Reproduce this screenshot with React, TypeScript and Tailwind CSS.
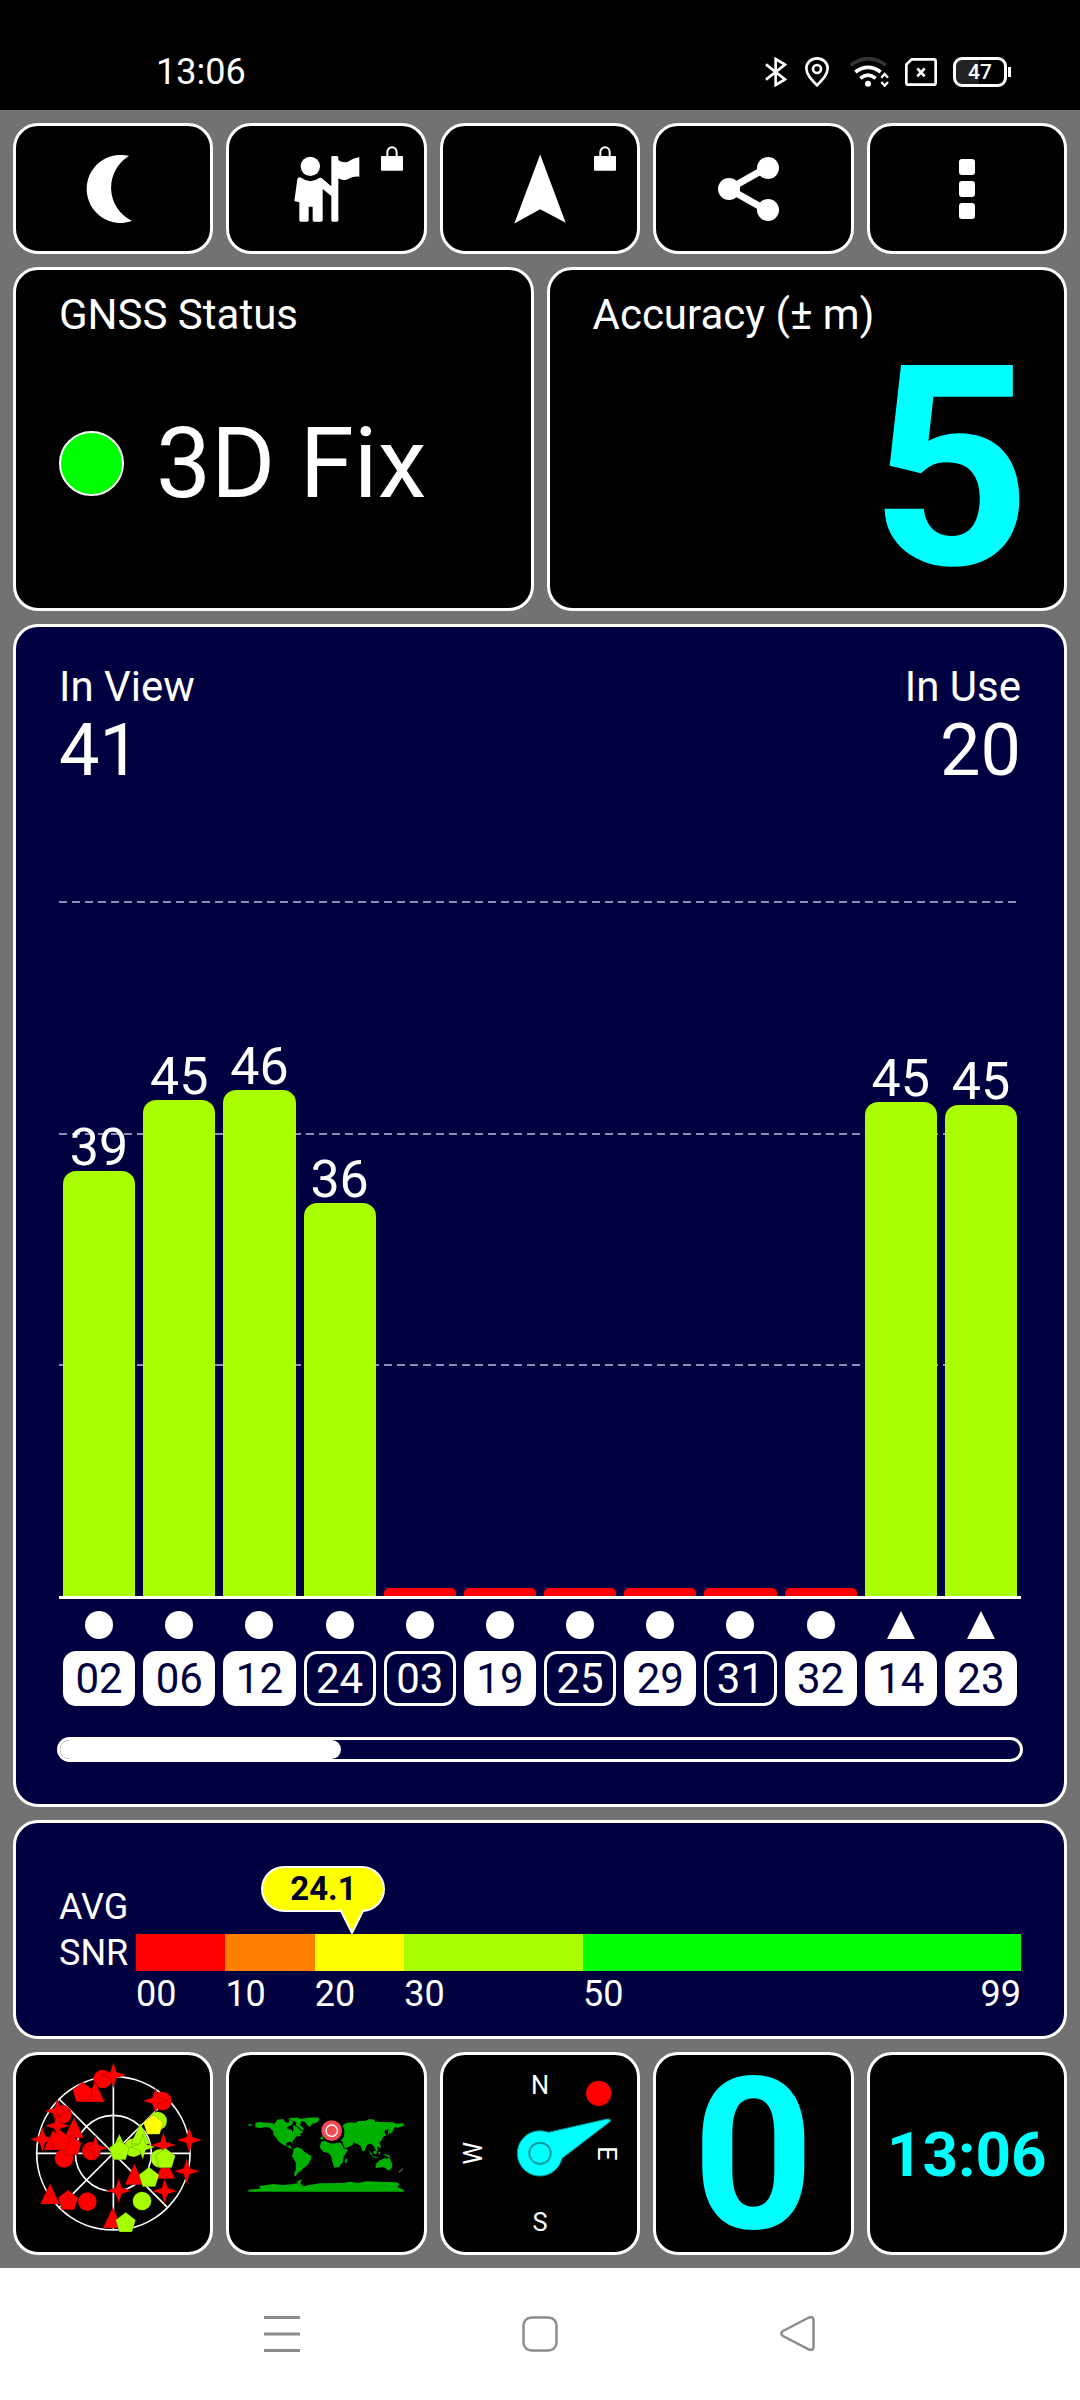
import type { ReactNode } from 'react';
import clsx from 'clsx';

const SNR_MAX = 63;

type Satellite = { id: string; snr: number; inUse: boolean; shape: 'circle' | 'triangle' };

const satellites: Satellite[] = [
    { id: '02', snr: 38.5, inUse: true, shape: 'circle' },
    { id: '06', snr: 45, inUse: true, shape: 'circle' },
    { id: '12', snr: 45.9, inUse: true, shape: 'circle' },
    { id: '24', snr: 35.6, inUse: false, shape: 'circle' },
    { id: '03', snr: 0, inUse: false, shape: 'circle' },
    { id: '19', snr: 0, inUse: true, shape: 'circle' },
    { id: '25', snr: 0, inUse: false, shape: 'circle' },
    { id: '29', snr: 0, inUse: true, shape: 'circle' },
    { id: '31', snr: 0, inUse: false, shape: 'circle' },
    { id: '32', snr: 0, inUse: true, shape: 'circle' },
    { id: '14', snr: 44.8, inUse: true, shape: 'triangle' },
    { id: '23', snr: 44.5, inUse: true, shape: 'triangle' },
];

const scale = [
    { label: '00', span: 10, color: 'bg-[#ff0000]' },
    { label: '10', span: 10, color: 'bg-[#ff8000]' },
    { label: '20', span: 10, color: 'bg-[#ffff00]' },
    { label: '30', span: 20, color: 'bg-[#a8ff00]' },
    { label: '50', span: 49, color: 'bg-[#00ff00]' },
];

type Mark = [kind: 'star' | 'circle' | 'triangle' | 'pentagon', x: number, y: number, color: string];

const RED = '#ff0000';
const LIME = '#a8ff00';

const skyMarks: Mark[] = [
    ['circle', 308, 118, RED],
    ['star', 340, 106, RED],
    ['triangle', 285, 160, RED],
    ['pentagon', 248, 158, RED],
    ['circle', 487, 184, RED],
    ['star', 466, 183, RED],
    ['circle', 187, 224, RED],
    ['star', 172, 214, RED],
    ['star', 172, 258, RED],
    ['triangle', 222, 268, RED],
    ['star', 127, 299, RED],
    ['triangle', 160, 304, RED],
    ['circle', 192, 356, RED],
    ['pentagon', 214, 318, RED],
    ['pentagon', 180, 302, RED],
    ['circle', 274, 334, RED],
    ['star', 286, 325, RED],
    ['circle', 473, 244, LIME],
    ['pentagon', 460, 256, '#ffff00'],
    ['triangle', 358, 318, LIME],
    ['circle', 400, 324, LIME],
    ['triangle', 421, 286, LIME],
    ['star', 428, 322, LIME],
    ['pentagon', 358, 332, LIME],
    ['star', 490, 316, RED],
    ['star', 568, 301, RED],
    ['circle', 480, 356, LIME],
    ['triangle', 496, 390, RED],
    ['pentagon', 496, 356, LIME],
    ['star', 560, 395, RED],
    ['triangle', 403, 408, RED],
    ['pentagon', 447, 413, LIME],
    ['star', 356, 453, RED],
    ['star', 494, 454, RED],
    ['circle', 426, 484, LIME],
    ['triangle', 150, 466, RED],
    ['pentagon', 204, 482, RED],
    ['circle', 262, 486, RED],
    ['triangle', 338, 538, RED],
    ['pentagon', 377, 549, LIME],
];

function SkyMark({ mark }: { mark: Mark }) {
    const [kind, x, y, color] = mark;
    const common = { fill: color, stroke: '#000', strokeOpacity: 0.3, strokeWidth: 2 };
    return (
        <g transform={`translate(${x} ${y})`} {...common}>
            {kind === 'circle' && <circle r="28" />}
            {kind === 'triangle' && <path d="M0-35 29 27H-29Z" />}
            {kind === 'pentagon' && <path d="M0-31 30-8 19 28H-19L-30-8Z" />}
            {kind === 'star' && <path d="M0-38 9-9 38 0 9 9 0 38-9 9-38 0-9-9Z" />}
        </g>
    );
}

function StatusBar() {
    return (
        <header className="flex h-[110px] items-center justify-between bg-black pt-[34px] pr-[69px] pl-[156px] text-white">
            <time className="text-[36px] leading-[44px]">13:06</time>
            <div className="flex items-center gap-4">
                <svg className="h-[30px] w-[22px]" viewBox="76 51 66 90" fill="none" stroke="#fff" strokeWidth="8">
                    <path d="M79 73 136 118 108 135V57L136 74 79 119" />
                </svg>
                <svg className="h-[30px] w-[30px]" viewBox="189 51 90 90" fill="none" stroke="#fff" strokeWidth="8">
                    <path d="M231 136C213 118 199 103 199 85a32 30 0 0 1 64 0c0 18-14 33-32 51Z" />
                    <circle cx="231" cy="87" r="12" />
                </svg>
                <svg className="h-[30px] w-10" viewBox="327 51 120 90" fill="none" stroke="#fff" strokeWidth="11">
                    <path d="M332 76Q384 36 438 76" stroke="#333" />
                    <path d="M346 96Q384 68 422 96" />
                    <path d="M361 115Q384 96 407 115" />
                    <circle cx="384" cy="131" r="9" fill="#fff" stroke="none" />
                    <path d="M424 113 434 102 444 113M424 126 434 137 444 126" strokeWidth="7" />
                </svg>
                <svg className="h-[30px] w-8" viewBox="492 51 96 90" fill="none" stroke="#fff" strokeWidth="8">
                    <path d="M512 58H578Q584 58 584 64V128Q584 134 578 134H502Q496 134 496 128V74Z" />
                    <path d="M529 85 551 109M551 85 529 109" />
                </svg>
                <div className="flex items-center gap-[1px]">
                    <div className="flex h-[30px] w-[54px] items-center justify-center rounded-[9px] border-[3px] border-white bg-linear-to-r from-[#222222] from-47% to-black to-47% text-[21px] leading-[24px] font-medium">
                        47
                    </div>
                    <div className="h-[10px] w-[3px] bg-white" />
                </div>
            </div>
        </header>
    );
}

function Tile({ label, className, children }: { label: string; className?: string; children: ReactNode }) {
    return (
        <button
            type="button"
            aria-label={label}
            className={clsx(
                'relative flex min-w-0 flex-1 items-center justify-center rounded-[25px] border-[3px] border-white bg-black',
                className,
            )}
        >
            {children}
        </button>
    );
}

function Lock() {
    return (
        <svg className="absolute top-[20px] right-[21px] h-[25px] w-[22px]" viewBox="0 0 66 75">
            <path d="M19 34V19a14 15 0 0 1 28 0V34" fill="none" stroke="#fff" strokeWidth="6" />
            <rect x="0" y="30" width="66" height="44" rx="3" fill="#fff" />
        </svg>
    );
}

function Toolbar() {
    return (
        <div className="flex gap-[13px]">
            <Tile label="Night mode" className="h-[131px]">
                <svg className="h-[68px] w-[54px]" viewBox="-3 0 54 68" fill="#fff">
                    <path d="M40 1A34 34 0 1 0 43 66A37 37 0 0 1 40 1Z" />
                </svg>
            </Tile>
            <Tile label="Guide" className="h-[131px]">
                <svg className="h-[66px] w-[66px]" viewBox="221 137 198 198" fill="#fff">
                    <circle cx="270" cy="168" r="29" />
                    <path d="M238 201Q232 201 231 207L222 272 237 276V330Q237 334 241 334H260Q265 334 265 330V289H277V330Q277 334 281 334H303Q307 334 307 330V236L333 257V330Q333 334 337 334H350Q354 334 354 330V204C368 212 378 210 388 204 397 199 405 197 417 199V141C405 142 397 146 388 151 376 158 366 157 354 149V141Q353 137 349 137H337Q333 137 333 141V228L307 206Q302 201 297 203 270 222 244 203Z" />
                </svg>
                <Lock />
            </Tile>
            <Tile label="Navigate" className="h-[131px]">
                <svg className="h-[70px] w-[52px]" viewBox="882 130 157 208" fill="#fff">
                    <path d="M961 130 1038 336 961 295 883 338Z" />
                </svg>
                <Lock />
            </Tile>
            <Tile label="Share" className="h-[131px]">
                <svg className="h-[66px] w-[70px]" viewBox="0 0 70 66" fill="#fff">
                    <path d="M50 11 11 33 50 55" fill="none" stroke="#fff" strokeWidth="7" />
                    <circle cx="50" cy="12" r="11" />
                    <circle cx="11" cy="33" r="11" />
                    <circle cx="50" cy="54" r="11" />
                </svg>
            </Tile>
            <Tile label="More" className="h-[131px]">
                <svg className="h-[60px] w-4" viewBox="0 0 16 60" fill="#fff">
                    <rect width="16" height="16" rx="3" />
                    <rect y="22" width="16" height="16" rx="3" />
                    <rect y="44" width="16" height="16" rx="3" />
                </svg>
            </Tile>
        </div>
    );
}

function StatusCards() {
    return (
        <div className="grid grid-cols-2 gap-[13px]">
            <section className="flex h-[344px] flex-col rounded-[25px] border-[3px] border-white bg-black px-[43px] pt-[21px]">
                <h2 className="text-[42px] leading-[48px]">GNSS Status</h2>
                <div className="flex flex-1 items-center gap-8 pb-5">
                    <span className="size-[65px] rounded-full border-2 border-white bg-[#00ff00]" />
                    <span className="text-[98px] leading-[96px]">3D Fix</span>
                </div>
            </section>
            <section className="flex h-[344px] flex-col rounded-[25px] border-[3px] border-white bg-black pt-[21px] pr-[33px] pl-[43px]">
                <h2 className="text-[42px] leading-[48px]">Accuracy (± m)</h2>
                <div className="flex flex-1 items-center justify-end pb-3 text-[280px] leading-[200px] font-bold text-[#00ffff]">
                    5
                </div>
            </section>
        </div>
    );
}

function SatelliteChart() {
    return (
        <section className="flex min-h-[900px] flex-1 flex-col rounded-[25px] border-[3px] border-white bg-[#000040] px-[43px] pt-9 pb-[42px]">
            <div className="flex justify-between">
                <div>
                    <div className="text-[42px] leading-[48px]">In View</div>
                    <div className="mt-1 text-[72px] leading-[72px]">41</div>
                </div>
                <div className="text-right">
                    <div className="text-[42px] leading-[48px]">In Use</div>
                    <div className="mt-1 text-[72px] leading-[72px]">20</div>
                </div>
            </div>

            <div className="mt-[114px] grid flex-1 border-b-[3px] border-white">
                <div className="col-start-1 row-start-1 flex flex-col">
                    {[63, 42, 21].map((level) => (
                        <div key={level} className="flex-1">
                            <div className="h-[2px] bg-[repeating-linear-gradient(90deg,#8c8cb4_0_8px,transparent_8px_13px)]" />
                        </div>
                    ))}
                </div>
                <div className="col-start-1 row-start-1 flex">
                    {satellites.map((sat) => (
                        <div key={sat.id} className="flex flex-1 flex-col px-1">
                            <div
                                className="flex min-h-0 basis-0 items-end justify-center text-[52px] leading-[46px]"
                                style={{ flexGrow: SNR_MAX - (sat.snr || 0.7) }}
                            >
                                {sat.snr > 0 && Math.round(sat.snr)}
                            </div>
                            <div
                                className={clsx('min-h-0 basis-0', sat.snr > 0 ? 'rounded-t-[13px] bg-[#a8ff00]' : 'rounded-t-[5px] bg-[#ff0000]')}
                                style={{ flexGrow: sat.snr || 0.7 }}
                            />
                        </div>
                    ))}
                </div>
            </div>

            <ul className="mt-3 flex">
                {satellites.map((sat) => (
                    <li key={sat.id} className="flex flex-1 flex-col items-center gap-3 px-1">
                        <svg className="size-7" viewBox="0 0 28 28" fill="#fff">
                            {sat.shape === 'circle' ? <circle cx="14" cy="14" r="14" /> : <path d="M14 0 28 28H0Z" />}
                        </svg>
                        <span
                            className={clsx(
                                'flex h-[55px] w-full items-center justify-center rounded-[13px] border-[3px] border-white text-[42px] leading-[48px]',
                                sat.inUse ? 'bg-white text-[#000040]' : 'text-white',
                            )}
                        >
                            {sat.id}
                        </span>
                    </li>
                ))}
            </ul>

            <div className="-mx-[2px] mt-[31px] h-[25px] overflow-hidden rounded-full border-[3px] border-white">
                <div className="h-full rounded-r-full bg-white" style={{ width: `${(12 / 41) * 100}%` }} />
            </div>
        </section>
    );
}

function SnrScale() {
    return (
        <section className="flex rounded-[25px] border-[3px] border-white bg-[#000040] px-[43px] pt-[61px] pb-[22px] text-[36px]">
            <div className="w-[77px] leading-[46px]">
                AVG
                <br />
                SNR
            </div>
            <div className="relative mt-[50px] flex-1">
                <div
                    className="absolute bottom-full -ml-[90px] w-[124px] text-[#000028]"
                    style={{ left: `${(24.1 / 99) * 100}%` }}
                >
                    <div className="h-[46px] rounded-full border-2 border-white bg-[#ffff00] text-center text-[33px] leading-[42px] font-bold">
                        24.1
                    </div>
                    <svg className="-mt-[3px] ml-[78px] block h-[25px] w-[26px]" viewBox="0 0 26 25">
                        <path d="M1 0 13 24 25 0" fill="#ffff00" stroke="#fff" strokeWidth="2" />
                    </svg>
                </div>
                <div className="flex">
                    {scale.map(({ label, span, color }) => (
                        <div key={label} className="basis-0" style={{ flexGrow: span }}>
                            <div className={clsx('h-[37px]', color)} />
                            <div className="mt-[3px] flex justify-between leading-[40px]">
                                <span>{label}</span>
                                {label === '50' && <span>99</span>}
                            </div>
                        </div>
                    ))}
                </div>
            </div>
        </section>
    );
}

function SkyPlot() {
    return (
        <svg className="size-full" viewBox="48 46 583 591">
            <g fill="none" stroke="#fff" strokeWidth="5">
                <circle cx="340" cy="341" r="230" />
                <circle cx="340" cy="341" r="114" />
                <path d="M340 111V571M110 341H570M177 178 503 504M503 178 177 504" />
            </g>
            {skyMarks.map((mark, i) => (
                <SkyMark key={i} mark={mark} />
            ))}
        </svg>
    );
}

function WorldMap() {
    return (
        <svg className="size-full" viewBox="28 46 583 591" fill="#00b000">
            <path d="M86 254H96V258H86ZM107 250 118 247 150 250 165 252 172 240 190 238 196 246 206 250 210 240 220 244 218 256 202 262 204 268 216 270 218 280 222 268 220 256 232 262 240 270 252 278 240 282 244 290 230 290 224 298 218 306 221 314 214 306 204 308 198 312 202 320 212 317 214 326 226 331 214 328 200 320 188 314 176 304 170 296 162 286 160 274 150 264 136 262 122 266 107 263Z" />
            <path d="M204 238 214 234 236 234 242 238 262 234 296 233 298 242 290 250 278 252 270 262 262 256 256 246 246 244 240 256 252 266 250 274 240 266 228 256 230 248 218 242Z" />
            <path d="M222 328 232 322 246 328 256 338 276 350 272 362 262 378 252 384 244 394 236 398 228 410 222 406 228 390 229 370 217 350 220 338Z" />
            <path d="M304 308 312 304 330 302 345 308 364 310 372 326 384 330 378 342 372 350 370 366 358 382 344 384 338 366 334 348 326 340 310 336 300 322ZM377 360 384 355 382 368 377 372Z" />
            <path d="M300 298 310 286 330 290 350 296 364 300 372 292 366 262 374 252 392 248 408 250 414 244 436 244 450 238 464 240 466 246 520 248 530 252 552 250V259L534 264 526 262 518 276 510 284 508 270 496 270 494 278 500 286 490 292 484 304 476 312 480 322 472 322 476 334 468 330 460 316 450 312 442 316 434 334 428 334 422 318 412 312 402 308 400 314 392 320 376 326 370 314 368 304Z" />
            <path d="M446 330 456 342 460 350 452 344ZM462 334 472 332 470 344 462 342ZM474 312 480 310 484 322 480 326ZM490 342 506 346 516 354 500 350ZM458 350 474 353 472 355 458 353ZM476 338 482 336 480 346ZM506 272 510 266 514 268 504 290Z" />
            <path d="M468 374 480 362 490 358 496 354 502 358 508 352 518 374 516 386 506 393 496 384 484 382 468 386Z" />
            <path d="M537 398 550 387" stroke="#556" strokeWidth="4" />
            <path d="M86 456V450L120 447V439L160 433 190 436 215 434 238 430 230 427 246 419 242 432 252 440 268 436 300 431 372 430 390 426 414 430 440 425 500 427 530 428 540 434 532 442 552 450V456Z" />
            <circle cx="340" cy="278" r="34" fill="#000" />
            <circle cx="336" cy="273" r="31" fill="#f04a50" />
            <circle cx="336" cy="273" r="17" fill="#f04a50" stroke="#fff" strokeWidth="4" />
        </svg>
    );
}

function Compass() {
    return (
        <svg className="size-full" viewBox="39 46 583 591">
            <g fill="#fff" fontSize="76" textAnchor="middle">
                <text x="330" y="163">
                    N
                </text>
                <text x="330" y="573">
                    S
                </text>
                <text transform="translate(504 341) rotate(90)">E</text>
                <text transform="translate(156 341) rotate(-90)">W</text>
            </g>
            <circle cx="506" cy="161" r="38" fill="#ff0000" />
            <path
                d="M355 278 530 238Q546 237 540 246L396 356A68 68 0 1 1 355 278Z"
                fill="#00ffff"
                stroke="#008c8c"
                strokeWidth="3"
            />
            <circle cx="330" cy="341" r="32" fill="none" stroke="#009ea0" strokeWidth="6" />
        </svg>
    );
}

function PageTiles() {
    return (
        <div className="flex gap-[13px] font-bold text-[#00ffff]">
            <Tile label="Sky view" className="h-[203px]">
                <SkyPlot />
            </Tile>
            <Tile label="Position" className="h-[203px]">
                <WorldMap />
            </Tile>
            <Tile label="Compass" className="h-[203px] font-normal">
                <Compass />
            </Tile>
            <Tile label="Speed" className="h-[203px] pt-1 text-[212px] leading-[192px]">
                0
            </Tile>
            <Tile label="Time" className="h-[203px] pt-[2px] text-[62px] leading-[72px]">
                13:06
            </Tile>
        </div>
    );
}

function NavBar() {
    return (
        <nav className="flex h-[132px] items-center justify-center gap-[222px] bg-white">
            <button type="button" aria-label="Recents">
                <svg className="block size-9" viewBox="0 0 72 72" stroke="#8c8c8c" strokeWidth="6">
                    <path d="M0 3H72M0 36H72M0 69H72" />
                </svg>
            </button>
            <button type="button" aria-label="Home">
                <svg className="block size-9" viewBox="0 0 72 72" fill="none" stroke="#8c8c8c" strokeWidth="5">
                    <rect x="3" y="3" width="66" height="66" rx="16" />
                </svg>
            </button>
            <button type="button" aria-label="Back">
                <svg className="block size-9" viewBox="0 0 72 72" fill="none" stroke="#8c8c8c" strokeWidth="5">
                    <path d="M58 3 6 30Q-1 35 6 40L58 67Q67 70 67 62V8Q67 0 58 3Z" />
                </svg>
            </button>
        </nav>
    );
}

export default function App() {
    return (
        <div className="flex min-h-screen flex-col bg-[#727272] font-['Roboto',sans-serif] text-white">
            <StatusBar />
            <main className="flex flex-1 flex-col gap-[13px] p-[13px]">
                <Toolbar />
                <StatusCards />
                <SatelliteChart />
                <SnrScale />
                <PageTiles />
            </main>
            <NavBar />
        </div>
    );
}
